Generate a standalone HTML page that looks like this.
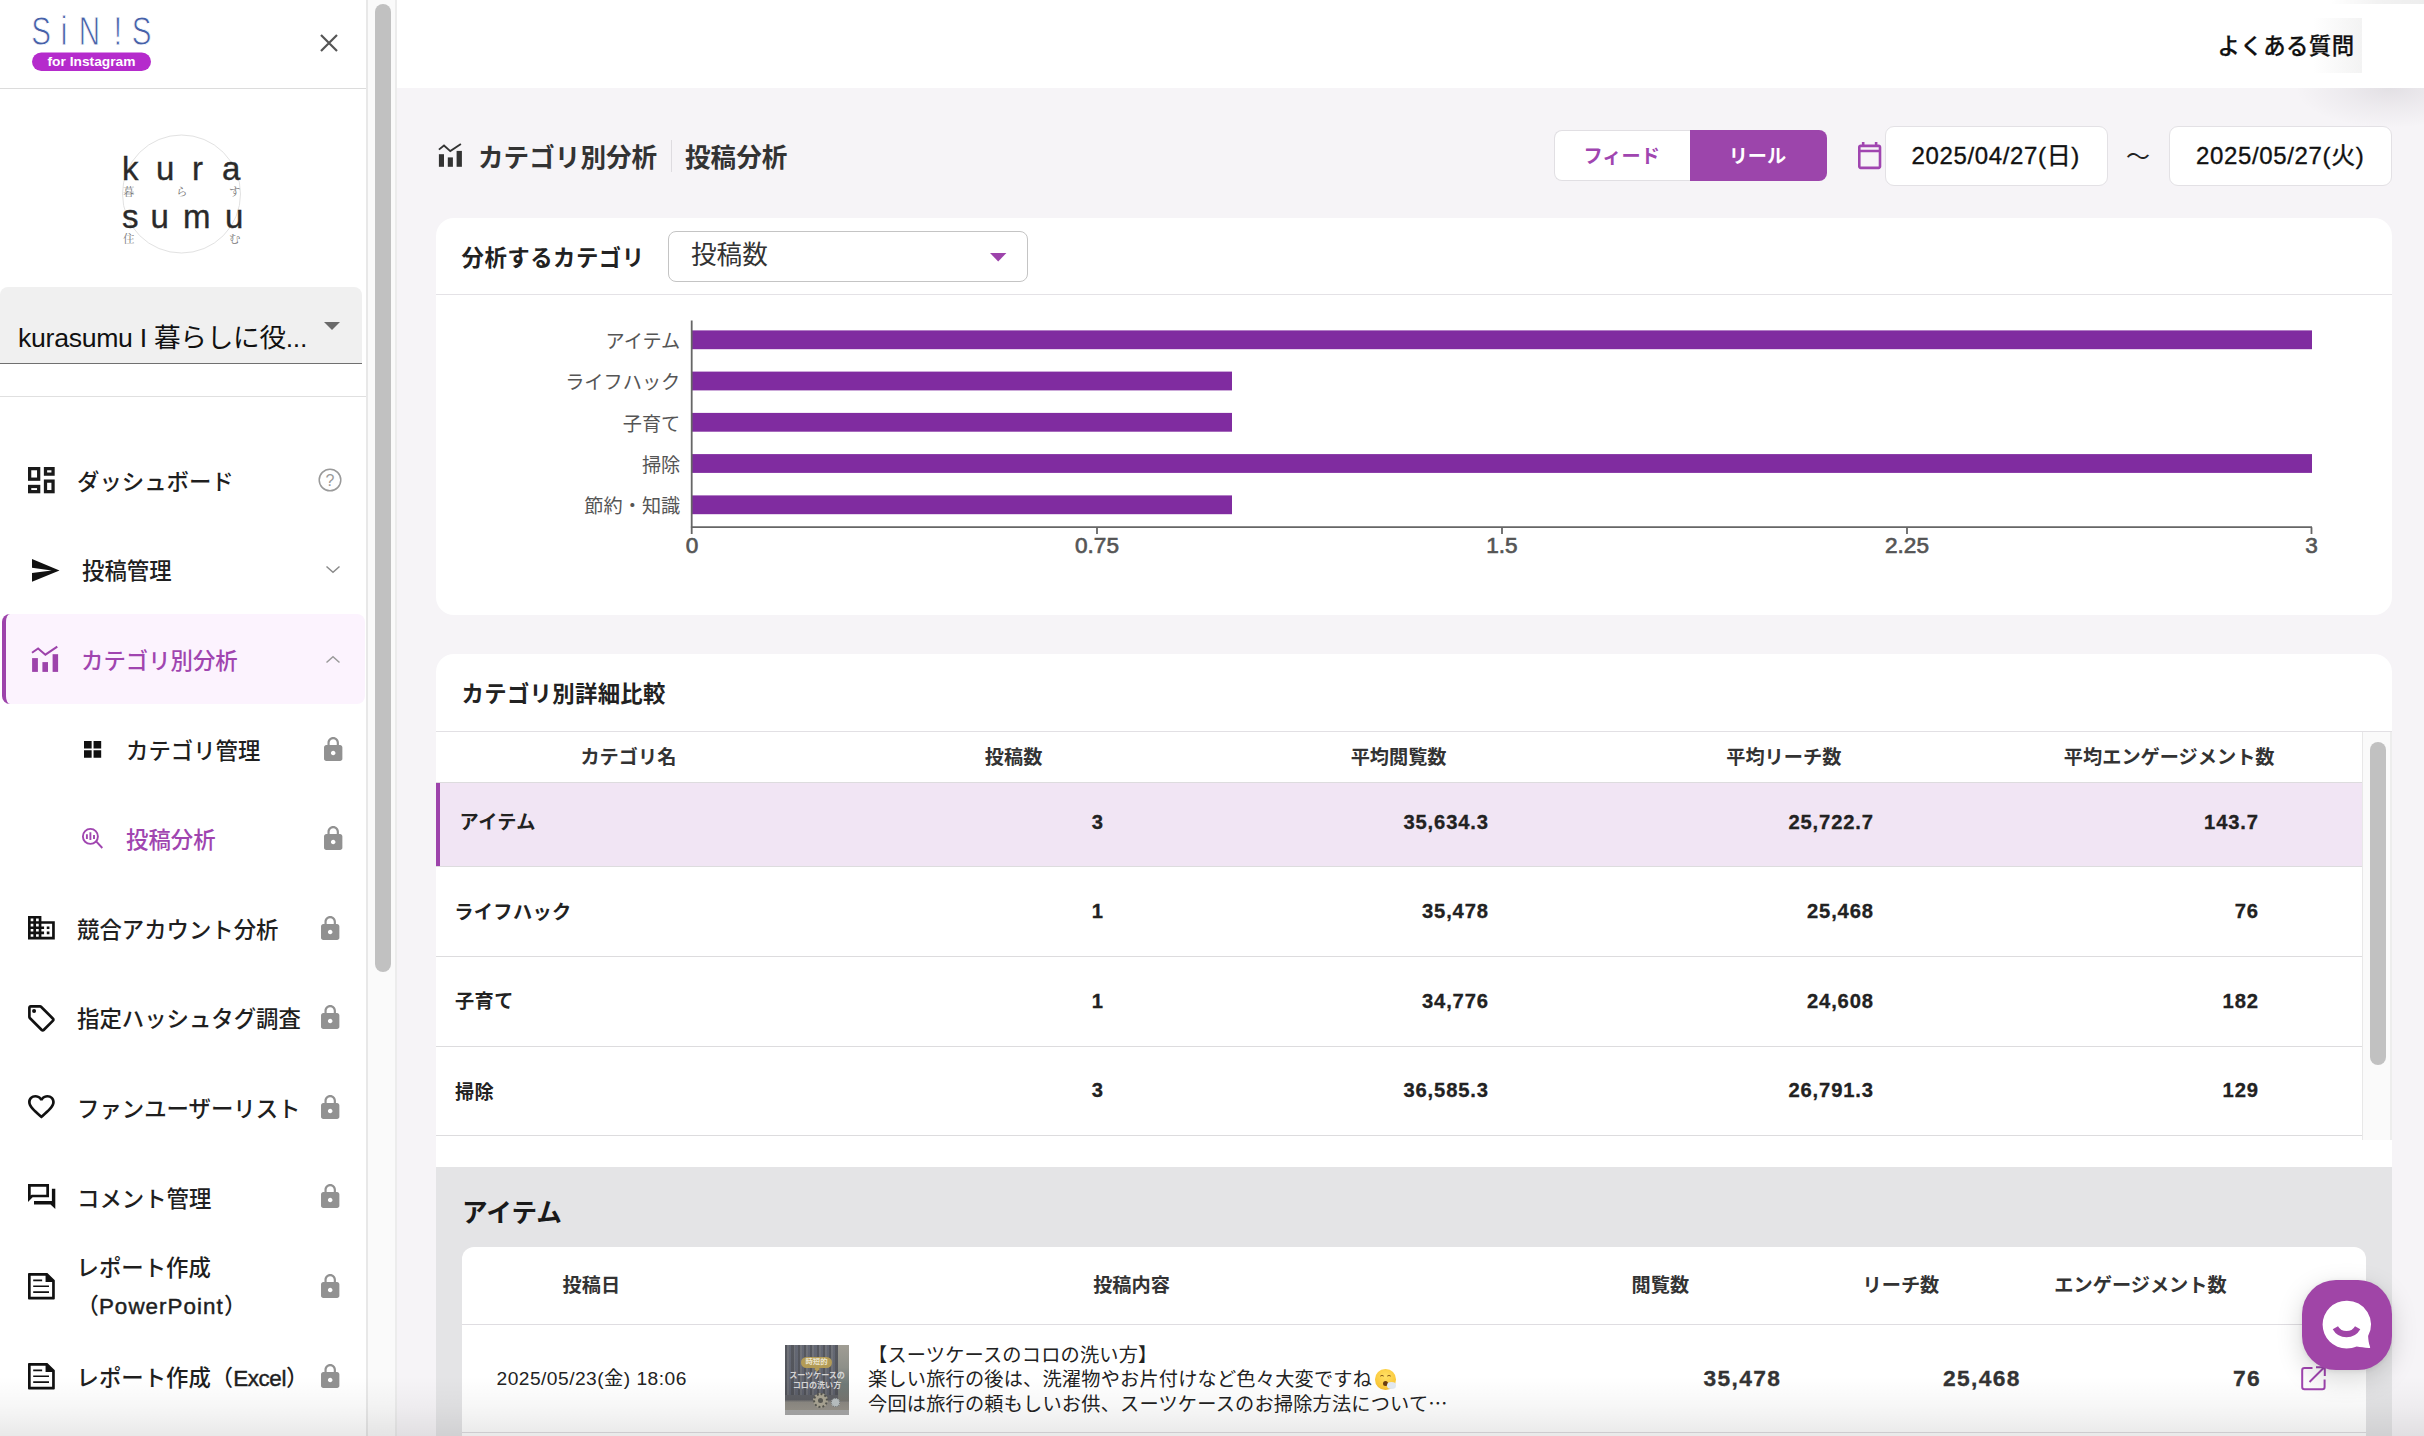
<!DOCTYPE html>
<html lang="ja">
<head>
<meta charset="utf-8">
<title>SINIS for Instagram - カテゴリ別分析 投稿分析</title>
<style>
*{box-sizing:border-box;margin:0;padding:0}
html,body{width:2424px;height:1436px;overflow:hidden;background:#f6f4f7}
body{position:relative;font-family:"Liberation Sans","Noto Sans CJK JP",sans-serif;color:#222;-webkit-font-smoothing:antialiased}
.abs{position:absolute}
.t{position:absolute;white-space:nowrap;line-height:1}
svg{position:absolute;display:block;overflow:visible}
/* ---------- sidebar ---------- */
#side{position:absolute;left:0;top:0;width:368px;height:1436px;background:#fff;border-right:2px solid #e8e8e8}
#sidescroll{position:absolute;left:368px;top:0;width:29px;height:1436px;background:#fafafa;border-right:2px solid #ececec}
#sidescroll i{position:absolute;left:7px;top:4px;width:16px;height:968px;border-radius:8px;background:#c1c1c1}
.nav{position:absolute;left:77px;font-size:22.4px;font-weight:500;color:#1f1f1f;white-space:nowrap;line-height:38px;height:38px}
.nav.sub{font-weight:500}
.pur{color:#a045b0}
/* ---------- main ---------- */
#head{position:absolute;left:397px;top:0;width:2027px;height:88px;background:#fff}
.card{position:absolute;background:#fff}
.b{font-weight:700}
.num{position:absolute;white-space:nowrap;font-weight:700;text-align:right;line-height:1;color:#222;-webkit-text-stroke:.3px currentColor}
</style>
</head>
<body>

<!-- ================= SIDEBAR ================= -->
<div id="side">
  <!-- logo -->
  <svg style="left:30px;top:10px" width="130" height="70" viewBox="0 0 130 70">
    <text transform="translate(0 35) scale(.72 1)" x="1.8 42.6 67.8 116.5 141.2" y="0" font-family="'Liberation Sans',sans-serif" font-size="41" fill="#4560a8" stroke="#fff" stroke-width=".9">SiN!S</text>
    <rect x="2" y="42.5" width="119" height="18.5" rx="9.25" fill="#b52bcc"/>
    <text x="61.5" y="56.3" text-anchor="middle" font-family="'Liberation Sans',sans-serif" font-weight="700" font-size="13.4" fill="#fff" textLength="88" lengthAdjust="spacingAndGlyphs">for Instagram</text>
  </svg>
  <!-- close -->
  <svg style="left:320px;top:34px" width="18" height="18" viewBox="0 0 18 18"><path d="M1 1L17 17M17 1L1 17" stroke="#555" stroke-width="2.2" fill="none"/></svg>
  <div class="abs" style="left:0;top:88px;width:366px;height:1px;background:#dcdcdc"></div>

  <!-- avatar -->
  <svg style="left:116px;top:130px" width="132" height="128" viewBox="116 130 132 128">
    <circle cx="181.5" cy="194" r="59" fill="#fff" stroke="#e2e2e2" stroke-width="1"/>
    <g font-family="'Liberation Sans',sans-serif" font-size="33" fill="#2a2a2a" stroke="#2a2a2a" stroke-width=".35">
      <text x="122 156 192 222" y="180">kura</text>
      <text x="122 150.5 183 225" y="227.5">sumu</text>
    </g>
    <g font-family="'Noto Serif CJK SC','Noto Sans CJK JP',serif" font-size="11.5" fill="#777">
      <text x="123 176 229" y="196">暮らす</text>
      <text x="123 229" y="243">住む</text>
    </g>
  </svg>

  <!-- account select -->
  <div class="abs" style="left:0;top:287px;width:362px;height:77px;background:#f0f0f0;border-radius:8px 8px 0 0;border-bottom:1.3px solid #707070"></div>
  <div class="t" style="left:18px;top:322px;font-size:26.67px;line-height:32px;color:#111;letter-spacing:-.3px">kurasumu I 暮らしに役...</div>
  <svg style="left:324px;top:322px" width="16" height="8" viewBox="0 0 16 8"><path d="M0 0h16L8 8z" fill="#6a6a6a"/></svg>
  <div class="abs" style="left:0;top:396px;width:366px;height:1px;background:#e0e0e0"></div>

  <!-- NAV ITEMS -->
  <div class="abs" style="left:2px;top:614px;width:363px;height:90px;background:#fcf3fe;border-radius:8px;border-left:4px solid #9d43ab"></div>

  <div class="nav" style="top:464px">ダッシュボード</div>
  <div class="nav" style="top:552.5px;left:82px">投稿管理</div>
  <div class="nav pur" style="top:642.7px;left:81px">カテゴリ別分析</div>
  <div class="nav sub" style="top:733px;left:126px">カテゴリ管理</div>
  <div class="nav sub pur b" style="top:822px;left:126px">投稿分析</div>
  <div class="nav" style="top:912px">競合アカウント分析</div>
  <div class="nav" style="top:1001px">指定ハッシュタグ調査</div>
  <div class="nav" style="top:1091px">ファンユーザーリスト</div>
  <div class="nav" style="top:1180.5px">コメント管理</div>
  <div class="nav" style="top:1250px;left:76.5px;line-height:37.6px;height:76px">レポート作成<br>（<span style="letter-spacing:1.05px;-webkit-text-stroke:.45px #1f1f1f">PowerPoint</span>）</div>
  <div class="nav" style="top:1359.5px;left:76.5px">レポート作成（<span style="-webkit-text-stroke:.45px #1f1f1f;letter-spacing:-.4px">Excel</span>）</div>

  <!-- nav icons -->
  <svg style="left:27.6px;top:467px" width="26.7" height="26.3" viewBox="0 0 18 17.7" preserveAspectRatio="none"><g fill="none" stroke="#1a1a1a" stroke-width="2.2"><rect x="1.100" y="1.100" width="6.100" height="7.100"/><rect x="1.100" y="13.100" width="6.100" height="3.500"/><rect x="11.800" y="1.100" width="5.100" height="3.700"/><rect x="11.800" y="9.500" width="5.100" height="7.100"/></g></svg>
  <svg style="left:318px;top:468px" width="24" height="24" viewBox="0 0 24 24"><circle cx="12" cy="12" r="10.8" fill="none" stroke="#9a9a9a" stroke-width="1.5"/><text x="12" y="17.6" text-anchor="middle" font-family="'Liberation Sans',sans-serif" font-size="16" fill="#9a9a9a">?</text></svg>
  <svg style="left:32.4px;top:559px" width="27.5" height="22.8" viewBox="2 3 21 18" preserveAspectRatio="none"><path fill="#111" d="M2.01 21L23 12 2.01 3 2 10l15 2-15 2z"/></svg>
  <svg style="left:325.5px;top:566.2px" width="14" height="7" viewBox="0 0 14 7"><path d="M0.5 0.5L7 6.2L13.5 0.5" fill="none" stroke="#8a8a8a" stroke-width="1.5"/></svg>
  <svg style="left:31px;top:645px" width="29" height="29" viewBox="31 645 29 29"><g fill="#9d43ab"><rect x="32.1" y="658.1" width="5.8" height="13.8"/><rect x="42.4" y="662.1" width="5.6" height="9.8"/><rect x="52.6" y="654.2" width="5.5" height="17.7"/></g><path d="M32 652.7L38.1 648.4L45.4 654.7L57.3 646.7" fill="none" stroke="#9d43ab" stroke-width="2"/></svg>
  <svg style="left:325.8px;top:655.5px" width="14" height="7" viewBox="0 0 14 7"><path d="M0.5 6.5L7 0.8L13.5 6.5" fill="none" stroke="#9a9a9a" stroke-width="1.5"/></svg>
  <svg style="left:84.2px;top:740.5px" width="17.2" height="16.8" viewBox="0 0 18 18" preserveAspectRatio="none"><path fill="#111" d="M0 0h8v8H0zM10 0h8v8h-8zM0 10h8v8H0zM10 10h8v8h-8z"/></svg>
  <svg style="left:81px;top:827px" width="23" height="23" viewBox="81 827 23 23"><g fill="none" stroke="#a045b0"><circle cx="90.4" cy="836.4" r="7.5" stroke-width="1.9"/><path d="M96.2 841.4L102.3 848" stroke-width="1.9"/><path d="M86.9 834.2v4.9M90.4 832.2v7.7M94 835v4.1" stroke-width="1.9"/></g></svg>
  <svg style="left:27.5px;top:915.9px" width="26.8" height="23.4" viewBox="2 3 20 18" preserveAspectRatio="none"><path fill="#111" d="M12 7V3H2v18h20V7H12zM6 19H4v-2h2v2zm0-4H4v-2h2v2zm0-4H4V9h2v2zm0-4H4V5h2v2zm4 12H8v-2h2v2zm0-4H8v-2h2v2zm0-4H8V9h2v2zm0-4H8V5h2v2zm10 12h-8v-2h2v-2h-2v-2h2v-2h-2V9h8v10zm-2-8h-2v2h2v-2zm0 4h-2v2h2v-2z"/></svg>
  <svg style="left:27.5px;top:1004.5px" width="26.8" height="26.7" viewBox="2 2 20 20"><path fill="#111" d="M21.41 11.58l-9-9C12.05 2.22 11.55 2 11 2H4c-1.1 0-2 .9-2 2v7c0 .55.22 1.05.59 1.42l9 9c.36.36.86.58 1.41.58s1.05-.22 1.41-.59l7-7c.37-.36.59-.86.59-1.41s-.23-1.06-.59-1.42zM13 20.01L4 11V4h7v-.01l9 9-7 7.02z"/><circle cx="6.5" cy="6.5" r="1.5" fill="#111"/></svg>
  <svg style="left:27.5px;top:1094.7px" width="26.8" height="23.6" viewBox="2 3 20 18.35" preserveAspectRatio="none"><path fill="#111" d="M16.5 3c-1.74 0-3.41.81-4.5 2.09C10.91 3.81 9.24 3 7.5 3 4.42 3 2 5.42 2 8.5c0 3.78 3.4 6.86 8.55 11.54L12 21.35l1.45-1.32C18.6 15.36 22 12.28 22 8.5 22 5.42 19.58 3 16.5 3zm-4.4 15.55l-.1.1-.1-.1C7.14 14.24 4 11.39 4 8.5 4 6.5 5.5 5 7.5 5c1.54 0 3.04.99 3.57 2.36h1.87C13.46 5.99 14.96 5 16.5 5c2 0 3.5 1.5 3.5 3.5 0 2.89-3.14 5.74-7.9 10.05z"/></svg>
  <svg style="left:27.5px;top:1183.9px" width="27.3" height="25.1" viewBox="2 2 20 18.8" preserveAspectRatio="none"><path fill="#111" fill-rule="evenodd" d="M2 2H17.4V12H5.4L2 15.4ZM4 4V10.6L4.6 10H15.4V4ZM19.5 5.6H22V20.8L18.5 17.3H6.4V14.8H19.5Z"/></svg>
  <svg style="left:27.5px;top:1272.8px" width="26.8" height="26.4" viewBox="3 3 18 18" preserveAspectRatio="none"><path fill="#111" fill-rule="evenodd" d="M3.6 3H16L21 8V20.4a.6.6 0 0 1-.6.6H3.6a.6.6 0 0 1-.6-.6V3.6a.6.6 0 0 1 .6-.6zM4.8 4.8V19.2H19.2V9.2H14.8V4.8zM6.5 7.45h6v1.1h-6zM6.5 11.5h10.6v1.1H6.5zM6.5 15.5h10.6v1.1H6.5z"/></svg>
  <svg style="left:27.5px;top:1362.6px" width="26.8" height="26.4" viewBox="3 3 18 18" preserveAspectRatio="none"><path fill="#111" fill-rule="evenodd" d="M3.6 3H16L21 8V20.4a.6.6 0 0 1-.6.6H3.6a.6.6 0 0 1-.6-.6V3.6a.6.6 0 0 1 .6-.6zM4.8 4.8V19.2H19.2V9.2H14.8V4.8zM6.5 7.45h6v1.1h-6zM6.5 11.5h10.6v1.1H6.5zM6.5 15.5h10.6v1.1H6.5z"/></svg>
  <svg style="left:323.9px;top:736.6px" width="18.4" height="24.1" viewBox="4 1 16 21"><path d="M18 8h-1V6c0-2.76-2.24-5-5-5S7 3.24 7 6v2H6c-1.1 0-2 .9-2 2v10c0 1.1.9 2 2 2h12c1.1 0 2-.9 2-2V10c0-1.1-.9-2-2-2zm-6 9c-1.1 0-2-.9-2-2s.9-2 2-2 2 .9 2 2-.9 2-2 2zm3.1-9H8.9V6c0-1.71 1.39-3.1 3.1-3.1 1.71 0 3.1 1.39 3.1 3.1v2z" fill="#919191"/></svg>
  <svg style="left:323.9px;top:826.1px" width="18.4" height="24.1" viewBox="4 1 16 21"><path d="M18 8h-1V6c0-2.76-2.24-5-5-5S7 3.24 7 6v2H6c-1.1 0-2 .9-2 2v10c0 1.1.9 2 2 2h12c1.1 0 2-.9 2-2V10c0-1.1-.9-2-2-2zm-6 9c-1.1 0-2-.9-2-2s.9-2 2-2 2 .9 2 2-.9 2-2 2zm3.1-9H8.9V6c0-1.71 1.39-3.1 3.1-3.1 1.71 0 3.1 1.39 3.1 3.1v2z" fill="#919191"/></svg>
  <svg style="left:320.8px;top:915.8px" width="18.4" height="24.1" viewBox="4 1 16 21"><path d="M18 8h-1V6c0-2.76-2.24-5-5-5S7 3.24 7 6v2H6c-1.1 0-2 .9-2 2v10c0 1.1.9 2 2 2h12c1.1 0 2-.9 2-2V10c0-1.1-.9-2-2-2zm-6 9c-1.1 0-2-.9-2-2s.9-2 2-2 2 .9 2 2-.9 2-2 2zm3.1-9H8.9V6c0-1.71 1.39-3.1 3.1-3.1 1.71 0 3.1 1.39 3.1 3.1v2z" fill="#919191"/></svg>
  <svg style="left:320.8px;top:1005.2px" width="18.4" height="24.1" viewBox="4 1 16 21"><path d="M18 8h-1V6c0-2.76-2.24-5-5-5S7 3.24 7 6v2H6c-1.1 0-2 .9-2 2v10c0 1.1.9 2 2 2h12c1.1 0 2-.9 2-2V10c0-1.1-.9-2-2-2zm-6 9c-1.1 0-2-.9-2-2s.9-2 2-2 2 .9 2 2-.9 2-2 2zm3.1-9H8.9V6c0-1.71 1.39-3.1 3.1-3.1 1.71 0 3.1 1.39 3.1 3.1v2z" fill="#919191"/></svg>
  <svg style="left:320.8px;top:1094.8px" width="18.4" height="24.1" viewBox="4 1 16 21"><path d="M18 8h-1V6c0-2.76-2.24-5-5-5S7 3.24 7 6v2H6c-1.1 0-2 .9-2 2v10c0 1.1.9 2 2 2h12c1.1 0 2-.9 2-2V10c0-1.1-.9-2-2-2zm-6 9c-1.1 0-2-.9-2-2s.9-2 2-2 2 .9 2 2-.9 2-2 2zm3.1-9H8.9V6c0-1.71 1.39-3.1 3.1-3.1 1.71 0 3.1 1.39 3.1 3.1v2z" fill="#919191"/></svg>
  <svg style="left:320.8px;top:1184.2px" width="18.4" height="24.1" viewBox="4 1 16 21"><path d="M18 8h-1V6c0-2.76-2.24-5-5-5S7 3.24 7 6v2H6c-1.1 0-2 .9-2 2v10c0 1.1.9 2 2 2h12c1.1 0 2-.9 2-2V10c0-1.1-.9-2-2-2zm-6 9c-1.1 0-2-.9-2-2s.9-2 2-2 2 .9 2 2-.9 2-2 2zm3.1-9H8.9V6c0-1.71 1.39-3.1 3.1-3.1 1.71 0 3.1 1.39 3.1 3.1v2z" fill="#919191"/></svg>
  <svg style="left:320.8px;top:1274.4px" width="18.4" height="24.1" viewBox="4 1 16 21"><path d="M18 8h-1V6c0-2.76-2.24-5-5-5S7 3.24 7 6v2H6c-1.1 0-2 .9-2 2v10c0 1.1.9 2 2 2h12c1.1 0 2-.9 2-2V10c0-1.1-.9-2-2-2zm-6 9c-1.1 0-2-.9-2-2s.9-2 2-2 2 .9 2 2-.9 2-2 2zm3.1-9H8.9V6c0-1.71 1.39-3.1 3.1-3.1 1.71 0 3.1 1.39 3.1 3.1v2z" fill="#919191"/></svg>
  <svg style="left:320.8px;top:1363.5px" width="18.4" height="24.1" viewBox="4 1 16 21"><path d="M18 8h-1V6c0-2.76-2.24-5-5-5S7 3.24 7 6v2H6c-1.1 0-2 .9-2 2v10c0 1.1.9 2 2 2h12c1.1 0 2-.9 2-2V10c0-1.1-.9-2-2-2zm-6 9c-1.1 0-2-.9-2-2s.9-2 2-2 2 .9 2 2-.9 2-2 2zm3.1-9H8.9V6c0-1.71 1.39-3.1 3.1-3.1 1.71 0 3.1 1.39 3.1 3.1v2z" fill="#919191"/></svg>
</div>
<div id="sidescroll"><i></i></div>


<!-- ================= HEADER ================= -->
<div id="head">
  <div class="abs" style="left:1803px;top:18px;width:162px;height:54.5px;background:linear-gradient(90deg,#fff 0%,#fff 70%,#f9f9f9 85%,#f3f3f3 100%)"></div>
  <div class="t" style="left:1820.5px;top:28px;font-size:22.4px;font-weight:500;line-height:38px;color:#111;letter-spacing:.45px;-webkit-text-stroke:.25px #111">よくある質問</div>
</div>
<div class="abs" style="left:2290px;top:88px;width:134px;height:46px;background:radial-gradient(ellipse 95px 40px at 100px 0,rgba(20,10,30,.085) 0%,rgba(20,10,30,.04) 50%,rgba(20,10,30,0) 100%)"></div>
<div class="abs" style="left:2330px;top:0;width:94px;height:4px;background:linear-gradient(90deg,rgba(0,0,0,0) 0%,rgba(0,0,0,.05) 50%,rgba(0,0,0,.07) 100%)"></div>

<!-- ================= TITLE BAR ================= -->
<svg style="left:438px;top:142px" width="25" height="26" viewBox="438 142 25 26"><g fill="#333"><rect x="438.90" y="154.20" width="5.10" height="12.60"/><rect x="447.80" y="157.40" width="5.10" height="9.40"/><rect x="456.60" y="150.90" width="5.30" height="15.90"/></g><path d="M438.90 149.60 L444.00 145.50 L450.30 151.10 L460.90 143.90" fill="none" stroke="#333" stroke-width="1.85"/></svg>
<div class="t b" style="left:478px;top:139.3px;font-size:25.6px;line-height:38px;color:#333">カテゴリ別分析</div>
<div class="abs" style="left:670.5px;top:140px;width:1.5px;height:32px;background:#dedce0"></div>
<div class="t b" style="left:685px;top:139.3px;font-size:25.6px;line-height:38px;color:#333">投稿分析</div>

<!-- feed / reel toggle -->
<div class="abs" style="left:1554px;top:130px;width:137px;height:51px;background:#fff;border:1.5px solid #e1dfe3;border-right:0;border-radius:8px 0 0 8px"></div>
<div class="t b" style="left:1583.5px;top:137.5px;font-size:19.2px;line-height:38px;color:#a045b0">フィード</div>
<div class="abs" style="left:1690px;top:130px;width:137px;height:51px;background:#9c45ab;border-radius:0 8px 8px 0"></div>
<div class="t b" style="left:1728.7px;top:137.5px;font-size:19.2px;line-height:38px;color:#fff">リール</div>
<!-- calendar -->
<svg style="left:1857.5px;top:142.2px" width="23.3" height="27.2" viewBox="3 1 18 21" preserveAspectRatio="none"><path fill="#a045b0" d="M19 3h-1V1h-2v2H8V1H6v2H5c-1.1 0-2 .9-2 2v15c0 1.1.9 2 2 2h14c1.1 0 2-.9 2-2V5c0-1.1-.9-2-2-2zm0 17H5V9h14v11zm0-13H5V5h14v2z"/></svg>
<div class="abs" style="left:1885px;top:126px;width:223px;height:60px;background:#fff;border:1.5px solid #e3e1e5;border-radius:9px"></div>
<div class="t" style="left:1911.5px;top:137px;font-size:24px;line-height:38px;color:#111;letter-spacing:.64px;-webkit-text-stroke:.35px #111">2025/04/27(日)</div>
<div class="t" style="left:2126px;top:138px;font-size:24px;line-height:38px;color:#222">〜</div>
<div class="abs" style="left:2169px;top:126px;width:223px;height:60px;background:#fff;border:1.5px solid #e3e1e5;border-radius:9px"></div>
<div class="t" style="left:2196px;top:137px;font-size:24px;line-height:38px;color:#111;letter-spacing:.64px;-webkit-text-stroke:.35px #111">2025/05/27(火)</div>

<!-- ================= CARD 1 : chart ================= -->
<div class="card" style="left:436px;top:218px;width:1956px;height:397px;border-radius:18px"></div>
<div class="abs" style="left:436px;top:294px;width:1956px;height:1.2px;background:#e4e2e6"></div>
<div class="t b" style="left:461.5px;top:240.2px;font-size:22.4px;line-height:38px;color:#222;letter-spacing:.5px">分析するカテゴリ</div>
<div class="abs" style="left:668px;top:231px;width:360px;height:51px;background:#fff;border:1.5px solid #c4c4c4;border-radius:8px"></div>
<div class="t" style="left:691px;top:236px;font-size:25.6px;line-height:38px;color:#333">投稿数</div>
<svg style="left:990px;top:252.5px" width="16.4" height="8.4" viewBox="0 0 16 8" preserveAspectRatio="none"><path d="M0 0h16L8 8z" fill="#9d43ab"/></svg>

<svg style="left:436px;top:300px" width="1956" height="290" viewBox="436 300 1956 290">
  <g fill="#802ca0">
    <rect x="692" y="330.4" width="1620" height="18.8"/>
    <rect x="692" y="371.6" width="540" height="18.8"/>
    <rect x="692" y="412.9" width="540" height="18.8"/>
    <rect x="692" y="454.1" width="1620" height="18.8"/>
    <rect x="692" y="495.4" width="540" height="18.8"/>
  </g>
  <path d="M691.7 320.5V534M690.7 527.2H2312M1097 527.2V534M1502 527.2V534M1907 527.2V534M2311.5 527.2V534" fill="none" stroke="#666" stroke-width="1.8"/>
  <g font-family="'Liberation Sans','Noto Sans CJK JP',sans-serif" font-size="19.2" fill="#555" text-anchor="end">
    <text x="680.3" y="348">アイテム</text>
    <text x="680.3" y="389">ライフハック</text>
    <text x="680.3" y="430.5">子育て</text>
    <text x="680.3" y="471.5">掃除</text>
    <text x="680.3" y="513">節約・知識</text>
  </g>
  <g font-family="'Liberation Sans',sans-serif" font-size="22.6" fill="#555" text-anchor="middle" stroke="#555" stroke-width=".65">
    <text x="692" y="552.8">0</text>
    <text x="1097" y="552.8">0.75</text>
    <text x="1502" y="552.8">1.5</text>
    <text x="1907" y="552.8">2.25</text>
    <text x="2311.5" y="552.8">3</text>
  </g>
</svg>

<!-- ================= CARD 2 : table ================= -->
<div class="card" style="left:436px;top:653.5px;width:1956px;height:800px;border-radius:18px 18px 0 0"></div>
<div class="t b" style="left:461.5px;top:675.5px;font-size:22.4px;line-height:38px;color:#222;letter-spacing:.3px">カテゴリ別詳細比較</div>
<div class="abs" style="left:436px;top:730.7px;width:1956px;height:1.2px;background:#e2e0e4"></div>
<div class="abs" style="left:436px;top:783px;width:1926px;height:83px;background:#f1e5f4;border-left:4px solid #9d43ab"></div>
<div class="abs" style="left:436px;top:782px;width:1926px;height:1px;background:#dddcde"></div>
<div class="abs" style="left:436px;top:866px;width:1926px;height:1px;background:#dddcde"></div>
<div class="abs" style="left:436px;top:956px;width:1926px;height:1px;background:#dddcde"></div>
<div class="abs" style="left:436px;top:1046px;width:1926px;height:1px;background:#dddcde"></div>
<div class="abs" style="left:436px;top:1135px;width:1926px;height:1px;background:#dddcde"></div>
<div class="t b" style="left:428.4px;width:400px;text-align:center;top:738.5px;font-size:19.2px;line-height:38px;color:#333">カテゴリ名</div>
<div class="t b" style="left:813.6px;width:400px;text-align:center;top:738.5px;font-size:19.2px;line-height:38px;color:#333">投稿数</div>
<div class="t b" style="left:1198.6px;width:400px;text-align:center;top:738.5px;font-size:19.2px;line-height:38px;color:#333">平均閲覧数</div>
<div class="t b" style="left:1583.8px;width:400px;text-align:center;top:738.5px;font-size:19.2px;line-height:38px;color:#333">平均リーチ数</div>
<div class="t b" style="left:1969.1999999999998px;width:400px;text-align:center;top:738.5px;font-size:19.2px;line-height:38px;color:#333">平均エンゲージメント数</div>
<div class="t b" style="left:459.5px;top:804.4px;font-size:19.2px;line-height:38px;color:#222;letter-spacing:.4px">アイテム</div>
<div class="num" style="left:903.85px;width:200px;top:802.6px;font-size:20.2px;line-height:38px;letter-spacing:.85px">3</div>
<div class="num" style="left:1288.85px;width:200px;top:802.6px;font-size:20.2px;line-height:38px;letter-spacing:.85px">35,634.3</div>
<div class="num" style="left:1673.85px;width:200px;top:802.6px;font-size:20.2px;line-height:38px;letter-spacing:.85px">25,722.7</div>
<div class="num" style="left:2058.85px;width:200px;top:802.6px;font-size:20.2px;line-height:38px;letter-spacing:.85px">143.7</div>
<div class="t b" style="left:454.2px;top:893.8px;font-size:19.2px;line-height:38px;color:#222;letter-spacing:.4px">ライフハック</div>
<div class="num" style="left:903.85px;width:200px;top:892.4px;font-size:20.2px;line-height:38px;letter-spacing:.85px">1</div>
<div class="num" style="left:1288.85px;width:200px;top:892.4px;font-size:20.2px;line-height:38px;letter-spacing:.85px">35,478</div>
<div class="num" style="left:1673.85px;width:200px;top:892.4px;font-size:20.2px;line-height:38px;letter-spacing:.85px">25,468</div>
<div class="num" style="left:2058.85px;width:200px;top:892.4px;font-size:20.2px;line-height:38px;letter-spacing:.85px">76</div>
<div class="t b" style="left:455px;top:983.2px;font-size:19.2px;line-height:38px;color:#222;letter-spacing:.4px">子育て</div>
<div class="num" style="left:903.85px;width:200px;top:981.8px;font-size:20.2px;line-height:38px;letter-spacing:.85px">1</div>
<div class="num" style="left:1288.85px;width:200px;top:981.8px;font-size:20.2px;line-height:38px;letter-spacing:.85px">34,776</div>
<div class="num" style="left:1673.85px;width:200px;top:981.8px;font-size:20.2px;line-height:38px;letter-spacing:.85px">24,608</div>
<div class="num" style="left:2058.85px;width:200px;top:981.8px;font-size:20.2px;line-height:38px;letter-spacing:.85px">182</div>
<div class="t b" style="left:455px;top:1073.5px;font-size:19.2px;line-height:38px;color:#222;letter-spacing:.4px">掃除</div>
<div class="num" style="left:903.85px;width:200px;top:1071.3px;font-size:20.2px;line-height:38px;letter-spacing:.85px">3</div>
<div class="num" style="left:1288.85px;width:200px;top:1071.3px;font-size:20.2px;line-height:38px;letter-spacing:.85px">36,585.3</div>
<div class="num" style="left:1673.85px;width:200px;top:1071.3px;font-size:20.2px;line-height:38px;letter-spacing:.85px">26,791.3</div>
<div class="num" style="left:2058.85px;width:200px;top:1071.3px;font-size:20.2px;line-height:38px;letter-spacing:.85px">129</div>
<div class="abs" style="left:2362px;top:731.7px;width:30px;height:409px;background:#fafafa;border-left:1.8px solid #e8e8e8;border-right:2px solid #ededed"></div>
<div class="abs" style="left:2370.2px;top:741.5px;width:15.8px;height:323.3px;border-radius:8px;background:#c1c1c1"></div>
<div class="abs" style="left:436px;top:1140px;width:1956px;height:27px;background:#fff"></div>
<!-- ================= DETAIL SECTION ================= -->
<div class="abs" style="left:436px;top:1167px;width:1956px;height:269px;background:#e4e4e6"></div>
<div class="t b" style="left:462px;top:1193.5px;font-size:25.6px;line-height:38px;color:#1a1a1a">アイテム</div>
<div class="abs" style="left:461.5px;top:1247px;width:1904.5px;height:189px;background:#fff;border-radius:12px 12px 0 0"></div>
<div class="t b" style="left:441.29999999999995px;width:300px;text-align:center;top:1266.5px;font-size:19.2px;line-height:38px;color:#333">投稿日</div>
<div class="t b" style="left:981.5px;width:300px;text-align:center;top:1266.5px;font-size:19.2px;line-height:38px;color:#333">投稿内容</div>
<div class="t b" style="left:1510.3px;width:300px;text-align:center;top:1266.5px;font-size:19.2px;line-height:38px;color:#333">閲覧数</div>
<div class="t b" style="left:1750.9px;width:300px;text-align:center;top:1266.5px;font-size:19.2px;line-height:38px;color:#333">リーチ数</div>
<div class="t b" style="left:1990.5px;width:300px;text-align:center;top:1266.5px;font-size:19.2px;line-height:38px;color:#333">エンゲージメント数</div>
<div class="abs" style="left:461.5px;top:1323.8px;width:1904.5px;height:1.5px;background:#dfdde1"></div>
<div class="abs" style="left:461.5px;top:1431.8px;width:1904.5px;height:1.5px;background:#dfdde1"></div>
<div class="t" style="left:496.5px;top:1360px;font-size:19.2px;line-height:38px;color:#222;letter-spacing:.47px">2025/05/23(金) 18:06</div>
<div class="abs" style="left:785px;top:1345px;width:64px;height:70px;overflow:hidden;background:#a6a6a6">
  <div class="abs" style="left:0;top:0;width:64px;height:65px;background:linear-gradient(180deg,#6a6c72 0%,#63656b 55%,#5c5d62 84%,#8b8882 88%,#959189 100%)"></div>
  <div class="abs" style="left:0;top:0;width:53px;height:50px;background:repeating-linear-gradient(90deg,rgba(58,60,68,.42) 0 2.2px,rgba(130,133,142,.3) 2.2px 4.1px,rgba(84,92,120,.26) 4.1px 6.3px)"></div>
  <div class="abs" style="left:53px;top:0;width:11px;height:56px;background:linear-gradient(180deg,#a09d94 0%,#8e9089 40%,#6f7a78 70%,#77756f 100%)"></div>
  <div class="abs" style="left:16px;top:12px;width:31px;height:11px;border-radius:5.5px;background:#b39b56"></div>
  <div class="abs" style="left:29.5px;top:21.5px;width:4px;height:4px;background:#b39b56;transform:rotate(45deg)"></div>
  <div class="t b" style="left:16px;width:31px;text-align:center;top:13.3px;font-size:7.4px;line-height:8.5px;color:#ece6d0">時短的</div>
  <div class="t b" style="left:0;width:64px;text-align:center;top:26.3px;font-size:8.1px;line-height:9.7px;color:#d6d6d6;white-space:normal"><span style="letter-spacing:-.05px">スーツケースの</span><br>コロの洗い方</div>
  <div class="abs" style="left:27.5px;top:48.3px;width:15px;height:15px;border-radius:50%;background:#a9a493;border:2.5px dotted #55554f"></div>
  <div class="abs" style="left:32.5px;top:53.3px;width:5px;height:5px;border-radius:50%;background:#5a5a55"></div>
  <div class="abs" style="left:46px;top:53px;width:8.5px;height:8.5px;border-radius:50%;background:#b9c0c2;border:1.5px dotted #6a6d6e"></div>
</div>
<div class="t" style="left:868px;font-size:19.2px;line-height:38px;color:#222;letter-spacing:.2px;top:1336.5px">【スーツケースのコロの洗い方】</div>
<div class="t" style="left:868px;font-size:19.2px;line-height:38px;color:#222;letter-spacing:.2px;top:1361px">楽しい旅行の後は、洗濯物やお片付けなど色々大変ですね<span style="display:inline-block;position:relative;width:20.4px;height:20.4px;vertical-align:top;top:8.3px;margin-left:3.2px;border-radius:50%;background:radial-gradient(circle at 50% 35%,#ffe066 0%,#fbc93a 65%,#eba92a 100%)"><span style="position:absolute;left:4.3px;top:6.2px;width:4.6px;height:2px;border-radius:2px 2px 0 0;border-top:1.4px solid #7a4a12"></span><span style="position:absolute;left:11.4px;top:6.2px;width:4.6px;height:2px;border-radius:2px 2px 0 0;border-top:1.4px solid #7a4a12"></span><span style="position:absolute;left:7.7px;top:11.7px;width:5px;height:5px;border-radius:50%;background:#6b3d10"></span><span style="position:absolute;left:11.5px;top:12.5px;width:9.5px;height:7px;border-radius:50%;background:#e3eaf2"></span><span style="font-size:0">😮‍💨</span></span></div>
<div class="t" style="left:868px;font-size:19.2px;line-height:38px;color:#222;letter-spacing:.2px;top:1383.7px">今回は旅行の頼もしいお供、スーツケースのお掃除方法について<span style="font-family:'Noto Sans CJK JP',sans-serif">…</span></div>
<div class="num" style="left:1581.35px;width:200px;top:1358.5px;font-size:22.8px;line-height:38px;letter-spacing:1.35px;color:#333">35,478</div>
<div class="num" style="left:1820.75px;width:200px;top:1358.5px;font-size:22.8px;line-height:38px;letter-spacing:1.35px;color:#333">25,468</div>
<div class="num" style="left:2061.15px;width:200px;top:1358.5px;font-size:22.8px;line-height:38px;letter-spacing:1.35px;color:#333">76</div>
<svg style="left:2300px;top:1365px" width="28" height="28" viewBox="2300 1365 28 28"><g fill="none" stroke="#a045b0" stroke-width="2"><path d="M2312.5 1368H2304.5a2.3 2.3 0 0 0-2.3 2.3V1387a2.3 2.3 0 0 0 2.3 2.3H2322.3a2.3 2.3 0 0 0 2.3-2.3V1379.5"/><path d="M2309.5 1382L2324.3 1367.3M2316 1367.3H2324.8V1376"/></g></svg>
<!-- chat FAB -->
<div class="abs" style="left:2302px;top:1280px;width:90px;height:89.5px;border-radius:34px;background:#a045a7;box-shadow:0 8px 26px rgba(0,0,0,.17),0 1px 5px rgba(0,0,0,.08)"></div>
<svg style="left:2302px;top:1280px" width="90" height="90" viewBox="2302 1280 90 90"><path fill="#fff" d="M2346.5 1300.7a23.9 23.9 0 1 0 0 47.8c3.8 0 7.2-.7 10.2-1.9 4 .5 8.200 1.400 12.800 1.300 .5 0 .8-.5 .6-1-1.500-3.600-1.800-7.500-2-10.800a23.900 23.900 0 0 0-21.600-35.400z"/><path fill="#a045a7" d="M2332.7 1329.300l5.300-3.100a9.800 9.800 0 0 0 17 0l5.300 3.100a15.900 15.900 0 0 1-27.600 0z"/></svg>
<div class="abs" style="left:0;top:1376px;width:2424px;height:60px;background:linear-gradient(180deg,rgba(0,0,0,0) 0%,rgba(0,0,0,.03) 50%,rgba(0,0,0,.085) 100%);pointer-events:none"></div>

</body>
</html>
